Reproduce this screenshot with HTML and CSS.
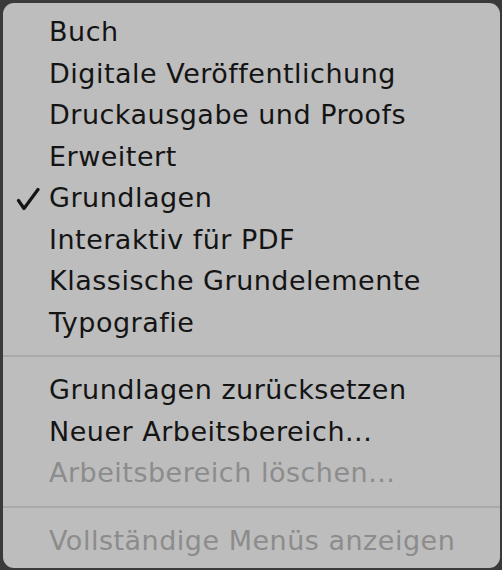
FILE: index.html
```html
<!DOCTYPE html>
<html lang="de">
<head>
<meta charset="utf-8">
<link rel="stylesheet" href="styles.css">
</head>
<body>
<div class="menu">
  <div class="group">
    <div class="item">Buch</div>
    <div class="item">Digitale Veröffentlichung</div>
    <div class="item">Druckausgabe und Proofs</div>
    <div class="item">Erweitert</div>
    <div class="item checked"><svg class="check" viewBox="0 0 24 24" width="24" height="24"><path d="M2.5 13.5 L8 21.5 L22 2.5" fill="none" stroke="#141414" stroke-width="3.2" stroke-linecap="round" stroke-linejoin="round"/></svg>Grundlagen</div>
    <div class="item">Interaktiv für PDF</div>
    <div class="item">Klassische Grundelemente</div>
    <div class="item">Typografie</div>
  </div>
  <div class="sep"></div>
  <div class="group">
    <div class="item">Grundlagen zurücksetzen</div>
    <div class="item">Neuer Arbeitsbereich...</div>
    <div class="item disabled">Arbeitsbereich löschen...</div>
  </div>
  <div class="sep"></div>
  <div class="group">
    <div class="item disabled">Vollständige Menüs anzeigen</div>
  </div>
</div>
</body>
</html>
```
FILE: styles.css
```css
html, body {
  margin: 0;
  padding: 0;
  background: #3a3a3a;
  width: 502px;
  height: 570px;
  overflow: hidden;
}
.menu {
  box-sizing: border-box;
  margin: 3px 2px 0 3px;
  height: 565px;
  background: #bdbdbd;
  border-radius: 11px;
  padding-top: 8px;
  font-family: "DejaVu Sans", sans-serif;
  font-size: 27px;
  letter-spacing: 0.5px;
  color: #141414;
}
.item {
  position: relative;
  height: 41.5px;
  line-height: 41.5px;
  padding-left: 46px;
  white-space: nowrap;
}
.check {
  position: absolute;
  left: 13px;
  top: 10px;
}
.disabled {
  color: #8c8c8c;
}
.sep {
  height: 2px;
  background: #a9a9a9;
  margin: 12px 0 12px;
}
```
